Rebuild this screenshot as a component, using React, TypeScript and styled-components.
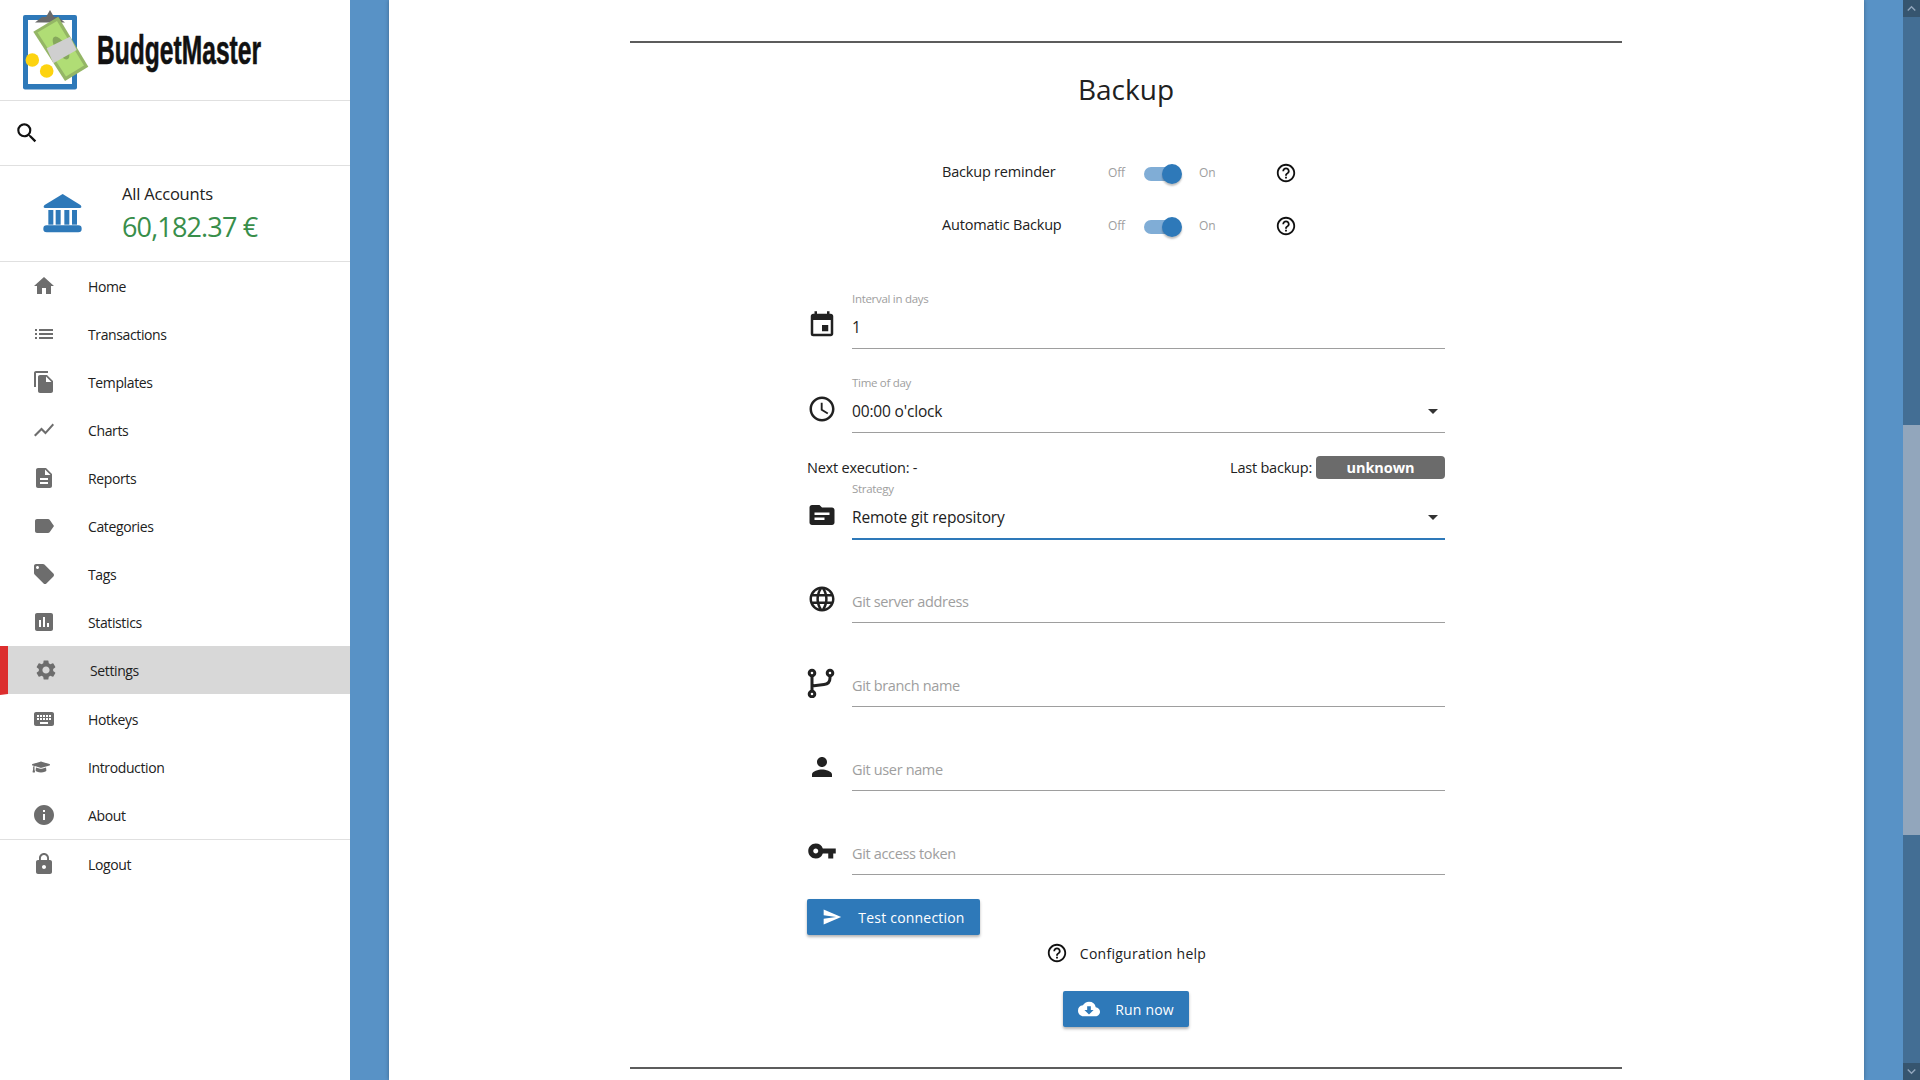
import React from "react";
import styled, { createGlobalStyle } from "styled-components";
import {
  MdHome, MdList, MdFileCopy, MdShowChart, MdDescription, MdLabel, MdLocalOffer, MdAssessment,
  MdSettings, MdKeyboard, MdInfo, MdLock, MdSearch, MdEvent, MdAccessTime,
  MdTopic, MdLanguage, MdPerson, MdVpnKey, MdSend, MdCloudDownload, MdHelpOutline, MdArrowDropDown,
  MdKeyboardArrowUp, MdKeyboardArrowDown,
} from "react-icons/md";
import { FaGraduationCap } from "react-icons/fa";

const FONT = `"Open Sans", "Noto Sans", sans-serif`;

const Global = createGlobalStyle`
  html, body { margin: 0; padding: 0; height: 100%; overflow: hidden; background: #5892c6; }
  body { font-family: ${FONT}; color: #212121; }
  * { box-sizing: border-box; }
`;

const Shell = styled.div`display: flex; width: 1920px; height: 1080px; overflow: hidden;`;
const Sidebar = styled.aside`
  width: 350px; flex: none; background: #fff; display: flex; flex-direction: column;
  position: relative; z-index: 1;
`;
const LogoBar = styled.div`
  height: 101px; border-bottom: 1px solid #e0e0e0; display: flex; align-items: flex-start; padding-left: 0;
`;
const LogoMark = styled.svg`width: 100px; height: 100px; flex: none;`;
const LogoText = styled.span`
  font-family: "Liberation Sans", sans-serif; font-weight: 700; font-size: 41px; color: #111;
  display: inline-block; transform: scaleX(0.6); transform-origin: left center;
  margin: 25px 0 0 -3px; line-height: 50px; white-space: nowrap; -webkit-text-stroke: 0.6px #111;
`;
const SearchBar = styled.div`
  height: 65px; border-bottom: 1px solid #e0e0e0; display: flex; align-items: center; padding-left: 14px;
  color: #111; font-size: 26px;
`;
const AccountBox = styled.div`
  height: 96px; border-bottom: 1px solid #e0e0e0; display: flex; align-items: center; padding-left: 35px;
`;
const AccountMark = styled.svg`width: 60px; height: 60px; flex: none; margin-right: 27px;`;
const AccountText = styled.div`padding-top: 5px;`;
const AccountName = styled.div`font-size: 16.5px; line-height: 22px; letter-spacing: -0.2px; color: #212121;`;
const AccountSum = styled.div`font-size: 27px; line-height: 44px; letter-spacing: -0.85px; color: #388e4a;`;
const Nav = styled.nav`display: flex; flex-direction: column;`;
const NavItem = styled.div<{ $active?: boolean }>`
  height: ${(p) => (p.$active ? 49 : 48)}px; display: flex; align-items: center;
  padding-left: ${(p) => (p.$active ? 26 : 32)}px;
  font-size: 14px; font-weight: 500; letter-spacing: -0.38px; color: #212121;
  background: ${(p) => (p.$active ? "#d8d8d8" : "transparent")};
  border-left: ${(p) => (p.$active ? "8px solid #dc2e2e" : "none")};
  ${(p) => p.$active && "border-bottom: 1px solid #fff;"}
`;
const NavIcon = styled.span<{ $size?: number }>`
  width: 56px; flex: none; display: flex; color: #6d6d6d; font-size: ${(p) => p.$size ?? 24}px;
`;
const NavDivider = styled.div`height: 1px; background: #e0e0e0;`;

const Gutter = styled.main`flex: 1; display: flex; padding: 0 39px; background: #5892c6; min-width: 0;`;
const Card = styled.section`
  flex: 1; background: #fff; box-shadow: 0 0 4px rgba(0,0,0,.3); padding: 41px 1px 0 0;
  display: flex; flex-direction: column; align-items: center;
`;
const Rule = styled.hr`width: 992px; height: 2px; margin: 0; border: 0; background: #5c5c5c; flex: none;`;
const Title = styled.h1`
  margin: 0; height: 52px; padding-top: 20px; font-size: 28px; font-weight: 400; line-height: 52px; letter-spacing: 0; color: #212121;
  box-sizing: content-box;
`;
const Form = styled.div`width: 638px; display: flex; flex-direction: column;`;
const SwitchRow = styled.div<{ $first?: boolean }>`
  height: 53px; margin-left: 135px; display: flex; align-items: center;
  ${(p) => p.$first && "margin-top: 31px;"}
`;
const SwitchLabel = styled.span`width: 166px; flex: none; font-size: 14.5px; letter-spacing: -0.2px; margin-top: -3px;`;
const SwitchText = styled.span<{ $w: number; $pad?: number }>`
  width: ${(p) => p.$w}px; padding-left: ${(p) => p.$pad ?? 0}px; flex: none; font-size: 12px; color: #9e9e9e; letter-spacing: -0.2px;
`;
const Track = styled.span`
  width: 37px; height: 14px; border-radius: 7px; background: #80add6; position: relative; flex: none; margin-top: 2px;
`;
const Thumb = styled.span`
  position: absolute; right: -1px; top: -3px; width: 20px; height: 20px; border-radius: 50%; background: #2e79b9;
  box-shadow: 0 2px 2px rgba(0,0,0,.25);
`;
const HelpIcon = styled.span`display: flex; color: #111; font-size: 22px; flex: none;`;

const Field = styled.div<{ $gap: number }>`
  display: grid; grid-template-columns: 45px 1fr; margin-top: ${(p) => p.$gap}px; height: 58px;
`;
const FieldIcon = styled.span`
  display: flex; align-items: flex-end; justify-content: flex-start; font-size: 30px; color: #212121;
  padding-bottom: 9px;
`;
const FieldBody = styled.div<{ $focus?: boolean }>`
  display: flex; flex-direction: column; border-bottom: 1px solid ${(p) => (p.$focus ? "#2e79b9" : "#9e9e9e")};
  ${(p) => p.$focus && "box-shadow: 0 1px 0 0 #2e79b9;"}
`;
const FieldLabel = styled.label`font-size: 11.5px; line-height: 16px; height: 16px; color: #9e9e9e; letter-spacing: -0.3px;`;
const ValueRow = styled.div`
  flex: 1; display: flex; align-items: center; justify-content: space-between; padding-bottom: 2px;
`;
const Value = styled.span`font-size: 15.5px; color: #212121; letter-spacing: -0.17px;`;
const Placeholder = styled.span`font-size: 14.5px; color: #9e9e9e; letter-spacing: -0.35px; padding-top: 18px;`;
const Caret = styled.span`display: flex; font-size: 24px; color: #333;`;
const InfoRow = styled.div`
  display: flex; align-items: center; justify-content: space-between; height: 23px; margin-top: 23px;
  font-size: 14.5px; letter-spacing: -0.22px;
`;
const InfoRight = styled.div`display: flex; align-items: center; gap: 4px;`;
const Badge = styled.span`
  width: 129px; height: 23px; border-radius: 4px; background: #6b6b6b; color: #fff; font-weight: 700;
  font-size: 14.5px; letter-spacing: -0.1px; display: flex; align-items: center; justify-content: center;
`;
const Button = styled.div<{ $w: number; $gap: number }>`
  width: ${(p) => p.$w}px; height: 36px; border-radius: 2px; background: #2e79b9; color: #fff;
  display: flex; align-items: center; justify-content: center; gap: ${(p) => p.$gap}px; font-size: 14px; font-weight: 500;
  letter-spacing: 0.2px; box-shadow: 0 2px 3px rgba(0,0,0,.3); flex: none;
`;
const ButtonIcon = styled.span<{ $size: number }>`display: flex; font-size: ${(p) => p.$size}px;`;
const TestWrap = styled.div`margin-top: 24px;`;
const HelpLine = styled.div`
  display: flex; align-items: center; justify-content: center; gap: 12px; height: 36px; font-size: 14px; font-weight: 500; letter-spacing: 0.27px;
`;
const RunWrap = styled.div`display: flex; justify-content: center; margin-top: 20px;`;
const BottomRule = styled(Rule)`margin-top: 40px;`;
const Scrollbar = styled.div`width: 17px; flex: none; background: #436e94; display: flex; flex-direction: column;`;
const ScrollEnd = styled.div`height: 17px; background: #36556f; color: #92a6bc; display: flex; align-items: center; justify-content: center; font-size: 17px;`;
const ScrollTrack = styled.div`flex: 1; padding-top: 408px;`;
const ScrollThumb = styled.div`height: 410px; background: #92a6bc;`;

const BranchIcon = () => (
  <svg width="28" height="31" viewBox="0 0 28 31" fill="none" stroke="#212121" strokeWidth="3">
    <circle cx="5" cy="6" r="2.8" />
    <circle cx="5" cy="27" r="2.8" />
    <circle cx="23" cy="6" r="2.8" />
    <path d="M5 9v15M23 9v2c0 4-2 6-6 6.5L5 19" />
  </svg>
);

const BankIcon = () => (
  <AccountMark viewBox="0 0 180 180">
    <path d="M83 30L135 62c6 4 5 10-2 10H32c-7 0-8-6-2-10z" fill="#2e79b9" />
    <rect x="40" y="78" width="15" height="44" fill="#2e79b9" />
    <rect x="62" y="78" width="15" height="44" fill="#2e79b9" />
    <rect x="88" y="78" width="15" height="44" fill="#2e79b9" />
    <rect x="111" y="78" width="15" height="44" fill="#2e79b9" />
    <rect x="25" y="124" width="115" height="21" rx="10" fill="#2e79b9" />
  </AccountMark>
);

const Logo = () => (
  <LogoMark viewBox="0 0 100 100">
    <rect x="23" y="15" width="54" height="74.5" rx="2" fill="#2e79b9" />
    <rect x="28" y="20" width="44" height="64" fill="#fff" />
    <path d="M35 22.5l7-5.5h4l4-7 4 7h4l7 5.5z" fill="#6a6a6a" />
    <path d="M33.3 31.7L58.3 16.7 88.3 66.7 65 81z" fill="#94b665" />
    <path d="M37.5 32.5L57 21 84 65.5 66 76.5z" fill="#b0dd75" />
    <ellipse cx="61" cy="48" rx="5.5" ry="13" transform="rotate(-32 61 48)" fill="#86a85c" />
    <path d="M46.7 48.3L70 36.7 76.7 50 53.3 63.3z" fill="#cfcfcf" />
    <circle cx="32.3" cy="60" r="6.8" fill="#fdd30f" />
    <circle cx="46.7" cy="71" r="6.8" fill="#fdd30f" />
  </LogoMark>
);

const navTop: [string, React.ReactNode, number?][] = [
  ["Home", <MdHome />],
  ["Transactions", <MdList />],
  ["Templates", <MdFileCopy />],
  ["Charts", <MdShowChart />],
  ["Reports", <MdDescription />],
  ["Categories", <MdLabel />],
  ["Tags", <MdLocalOffer />],
  ["Statistics", <MdAssessment />],
];
const navBottom: [string, React.ReactNode, number?][] = [
  ["Hotkeys", <MdKeyboard />],
  ["Introduction", <FaGraduationCap />, 18],
  ["About", <MdInfo />],
];

const Item = ({ label, icon, size, active }: { label: string; icon: React.ReactNode; size?: number; active?: boolean }) => (
  <NavItem $active={active}>
    <NavIcon $size={size}>{icon}</NavIcon>
    {label}
  </NavItem>
);

const SwitchLine = ({ label, first }: { label: string; first?: boolean }) => (
  <SwitchRow $first={first}>
    <SwitchLabel>{label}</SwitchLabel>
    <SwitchText $w={36}>Off</SwitchText>
    <Track><Thumb /></Track>
    <SwitchText $w={94} $pad={18}>On</SwitchText>
    <HelpIcon><MdHelpOutline /></HelpIcon>
  </SwitchRow>
);

const TextField = ({ icon, text, gap = 26 }: { icon: React.ReactNode; text: string; gap?: number }) => (
  <Field $gap={gap}>
    <FieldIcon>{icon}</FieldIcon>
    <FieldBody>
      <ValueRow><Placeholder>{text}</Placeholder></ValueRow>
    </FieldBody>
  </Field>
);

const ValueField = ({ icon, label, value, gap, select, focus }: { icon: React.ReactNode; label: string; value: string; gap: number; select?: boolean; focus?: boolean }) => (
  <Field $gap={gap}>
    <FieldIcon>{icon}</FieldIcon>
    <FieldBody $focus={focus}>
      <FieldLabel>{label}</FieldLabel>
      <ValueRow>
        <Value>{value}</Value>
        {select && <Caret><MdArrowDropDown /></Caret>}
      </ValueRow>
    </FieldBody>
  </Field>
);

export default function App() {
  return (
    <Shell>
      <Global />
      <Sidebar>
        <LogoBar>
          <Logo />
          <LogoText>BudgetMaster</LogoText>
        </LogoBar>
        <SearchBar><MdSearch /></SearchBar>
        <AccountBox>
          <BankIcon />
          <AccountText>
            <AccountName>All Accounts</AccountName>
            <AccountSum>60,182.37 €</AccountSum>
          </AccountText>
        </AccountBox>
        <Nav>
          {navTop.map(([l, i, s]) => <Item key={l} label={l} icon={i} size={s} />)}
          <Item label="Settings" icon={<MdSettings />} active />
          {navBottom.map(([l, i, s]) => <Item key={l} label={l} icon={i} size={s} />)}
          <NavDivider />
          <Item label="Logout" icon={<MdLock />} />
        </Nav>
      </Sidebar>
      <Gutter>
        <Card>
          <Rule />
          <Title>Backup</Title>
          <Form>
            <SwitchLine label="Backup reminder" first />
            <SwitchLine label="Automatic Backup" />
            <ValueField icon={<MdEvent />} label="Interval in days" value="1" gap={39} />
            <ValueField icon={<MdAccessTime />} label="Time of day" value="00:00 o'clock" gap={26} select />
            <InfoRow>
              <span>Next execution: -</span>
              <InfoRight>
                <span>Last backup:</span>
                <Badge>unknown</Badge>
              </InfoRight>
            </InfoRow>
            <ValueField icon={<MdTopic />} label="Strategy" value="Remote git repository" gap={2} select focus />
            <TextField icon={<MdLanguage />} text="Git server address" />
            <TextField icon={<BranchIcon />} text="Git branch name" />
            <TextField icon={<MdPerson />} text="Git user name" />
            <TextField icon={<MdVpnKey />} text="Git access token" />
            <TestWrap>
              <Button $w={173} $gap={16}><ButtonIcon $size={20}><MdSend /></ButtonIcon>Test connection</Button>
            </TestWrap>
            <HelpLine><HelpIcon><MdHelpOutline /></HelpIcon>Configuration help</HelpLine>
            <RunWrap>
              <Button $w={126} $gap={15}><ButtonIcon $size={22}><MdCloudDownload /></ButtonIcon>Run now</Button>
            </RunWrap>
          </Form>
          <BottomRule />
        </Card>
      </Gutter>
      <Scrollbar>
        <ScrollEnd><MdKeyboardArrowUp /></ScrollEnd>
        <ScrollTrack><ScrollThumb /></ScrollTrack>
        <ScrollEnd><MdKeyboardArrowDown /></ScrollEnd>
      </Scrollbar>
    </Shell>
  );
}
